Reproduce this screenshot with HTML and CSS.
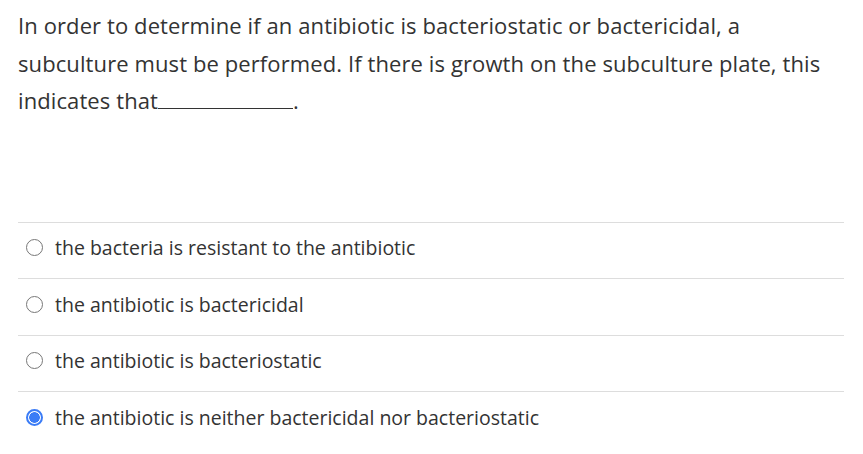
FILE: index.html
```html
<!DOCTYPE html>
<html>
<head>
<meta charset="utf-8">
<link rel="stylesheet" href="styles.css">
</head>
<body>
<div class="question">
  <p class="prompt">In order to determine if an antibiotic is bacteriostatic or bactericidal, a subculture must be performed. If there is growth on the subculture plate, this indicates that<span class="blank"></span>.</p>
  <ul class="choices">
    <li class="choice"><span class="radio"></span><span class="label">the bacteria is resistant to the antibiotic</span></li>
    <li class="choice"><span class="radio"></span><span class="label">the antibiotic is bactericidal</span></li>
    <li class="choice"><span class="radio"></span><span class="label">the antibiotic is bacteriostatic</span></li>
    <li class="choice"><span class="radio checked"></span><span class="label">the antibiotic is neither bactericidal nor bacteriostatic</span></li>
  </ul>
</div>
</body>
</html>
```
FILE: styles.css
```css
html, body {
  margin: 0;
  padding: 0;
  background: #fff;
}
body {
  font-family: "Open Sans", "Liberation Sans", sans-serif;
  color: #333;
}
.question {
  padding: 7px 19px 0 18px;
}
.prompt {
  margin: 0;
  font-size: 22px;
  letter-spacing: 0.1px;
  line-height: 37.5px;
  width: 815px;
}
.blank {
  display: inline-block;
  width: 135px;
  border-bottom: 1px solid #333;
  vertical-align: baseline;
  height: 1px;
}
.choices {
  list-style: none;
  margin: 102px 0 0 0;
  padding: 0;
}
.choice {
  box-sizing: border-box;
  display: flex;
  align-items: center;
  gap: 12px;
  border-top: 1px solid #ddd;
  height: 56.5px;
  padding: 0 0 5px 8px;
  font-size: 19.5px;
}
.radio {
  box-sizing: border-box;
  width: 17px;
  height: 17px;
  border: 1.5px solid #777;
  border-radius: 50%;
  flex: none;
}
.radio.checked {
  border: 2px solid #3b7cf6;
  background: radial-gradient(circle, #3b7cf6 0 5px, #fff 5.6px);
}
```
